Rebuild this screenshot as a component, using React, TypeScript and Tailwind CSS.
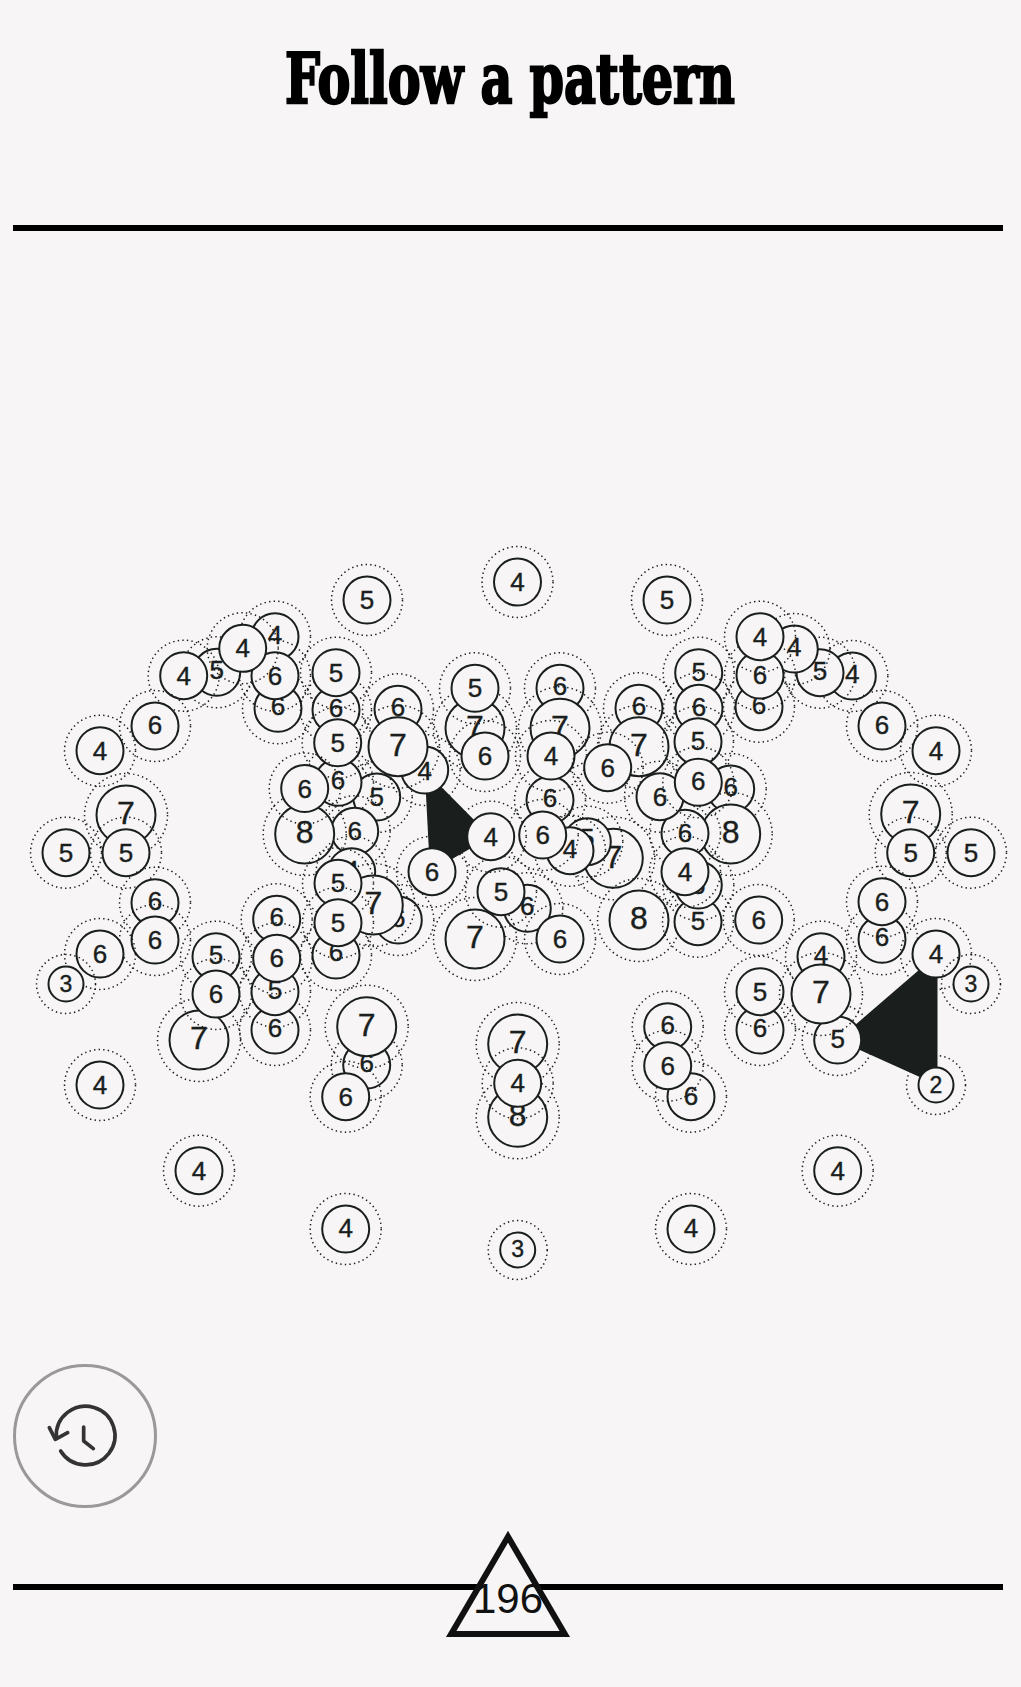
type Node = [number, number, number, number?];

// back to front, later nodes paint over earlier ones (x, y, value, digit nudge)
const NODES: Node[] = [
  [517.5, 582, 4], [367, 600, 5], [667, 600, 5],
  // left arc
  [275, 636.7, 4, -2], [278, 708.3, 6, -2], [216.7, 672.3, 5, -2], [275, 675.7, 6], [242.7, 648.3, 4], [183.7, 675.7, 4],
  [155, 726, 6, -1], [100, 750.7, 4], [126, 815, 7, -2], [126, 852.7, 5], [66, 852.7, 5],
  // left cluster
  [336, 710, 6, -2], [336, 672.7, 5], [376.7, 797, 5], [338, 782.3, 6, -2], [337.7, 742.7, 5], [398, 709.3, 6, -2], [424.7, 770, 4, 1],
  [398, 746.7, 7, -2], [354.7, 831.3, 6], [304.7, 834, 8, -2], [304.7, 788.5, 6], [351.7, 871.7, 4, -2],
  [398.3, 920, 6, -2], [373.3, 905, 7, -2], [338, 883.3, 5], [336, 955, 6, -3], [338, 922.7, 5],
  // lower left
  [155, 902.7, 6, -2], [155, 940, 6], [100, 954, 6], [66, 984, 3], [216, 956.7, 5, -2], [199, 1040, 7, -2], [216, 994, 6],
  [276.7, 919.3, 6, -2], [275, 1030, 6, -2], [275, 991.7, 5, -2], [276.7, 958.3, 6],
  [366.7, 1065, 6, -2], [366.7, 1026.7, 7, -2], [345.7, 1096.7, 6], [100, 1085, 4], [199, 1170.7, 4], [345.7, 1229, 4, -1],
  // centre
  [475, 728.3, 7, -2], [475, 688.3, 5], [485, 756, 6], [560, 688.3, 6, -2], [560, 728.3, 7, -2], [550, 800, 6, -2], [551, 756, 4],
  [613.3, 858.3, 7, -2], [587.3, 841.7, 5, -4], [570, 850.7, 4, -2], [542.7, 835, 6],
  [527.3, 908.3, 6, -2], [475, 939, 7, -2], [501, 891.7, 5], [560, 939, 6], [490.7, 836.7, 4], [432, 871.7, 6], [639, 920, 8, -2],
  // right cluster
  [639, 708.3, 6, -2], [639, 746.7, 7, -2], [607.7, 767.7, 6], [698.7, 672.7, 5, -1], [699, 708.3, 6, -1], [698, 741.7, 5, -1],
  [730.7, 789, 6, -2], [730.7, 834, 8, -2], [685, 833.3, 6], [660, 796.7, 6], [698.3, 782.3, 6, -1],
  [698, 921.7, 5, -1], [698.3, 885, 6], [685, 871.7, 4], [758.7, 920, 6],
  // right arc
  [852.3, 676, 4, -2], [759, 706.7, 6, -2], [820, 672.7, 5, -2], [794.3, 649, 4, -2], [760, 675, 6], [760, 636.7, 4],
  [882, 726, 6, -1], [936, 750.7, 4], [910.7, 814, 7, -2], [910.7, 852.7, 5], [971, 852.7, 5],
  // lower middle and right
  [882, 939.3, 6, -2], [882, 901.7, 6], [821, 956.7, 4, -2], [760, 1030, 6, -2], [760, 991.7, 5], [837.7, 1040, 5, -1], [821, 994, 7, -2],
  [936, 954, 4], [971, 984, 3], [936, 1085, 2], [837.7, 1170.7, 4],
  [517.7, 1044, 7, -2], [517.7, 1117.3, 8, -3], [517.7, 1083.3, 4], [517.7, 1250, 3, -1],
  [667.7, 1026.7, 6, -2], [691, 1096.7, 6, -1], [667.7, 1065.7, 6], [691, 1229, 4, -1],
];

function radius(n: number) {
  if (n <= 3) return 17.5;
  if (n <= 6) return 23.5;
  return 29.5;
}

function fontClass(n: number) {
  if (n <= 3) return "text-[23px]";
  if (n <= 6) return "text-[26px]";
  return "text-[32px]";
}

function fontSize(n: number) {
  if (n <= 3) return 23;
  if (n <= 6) return 26;
  return 32;
}

function PatternNode({ node }: { node: Node }) {
  const [x, y, n, dy = 0] = node;
  const r = radius(n);
  return (
    <g>
      <circle cx={x} cy={y} r={r} className="fill-[#f7f5f6] stroke-[#1a1e1d] stroke-[2]" />
      <text
        x={x}
        y={y + fontSize(n) * 0.35 + dy}
        textAnchor="middle"
        className={`${fontClass(n)} fill-[#1a1e1d] stroke-[#1a1e1d] stroke-[0.4]`}
      >
        {n}
      </text>
      <circle
        cx={x}
        cy={y}
        r={r + 12}
        strokeDasharray="1.4 3.2"
        className="fill-none stroke-[#1a1e1d] stroke-[1.5]"
      />
    </g>
  );
}

function HistoryIcon() {
  return (
    <svg
      viewBox="135 137 240 240"
      fill="none"
      stroke="#333333"
      strokeWidth="11"
      strokeLinecap="round"
      strokeLinejoin="round"
      className="w-20 h-20"
    >
      <path d="M182 302 A88 88 0 1 0 169 262" />
      <path d="M148 232 L166 267 L203 247" />
      <path d="M251 230 V272 L280 295" />
    </svg>
  );
}

export default function App() {
  return (
    <div className="w-[1021px] min-h-screen bg-[#f7f5f6] font-['Liberation_Sans',sans-serif] overflow-hidden">
      <header className="h-[225px] flex justify-center pt-[39px]">
        <h1 className="m-0 h-[80px] whitespace-nowrap scale-x-[0.705] font-['DejaVu_Serif',serif] font-bold text-[70px] leading-[80px] text-black [-webkit-text-stroke:2.5px_#000]">
          Follow a pattern
        </h1>
      </header>
      <div className="h-[6px] mx-[13px] w-[990px] bg-black" />

      <main className="relative h-[1353px]">
        <svg viewBox="0 231 1021 1353" className="block w-[1021px] h-[1353px]">
          <polygon points="424.7,770 490.7,836.7 430,871.7" className="fill-[#1a1e1d]" />
          <polygon points="937.5,954 837.7,1040 937.5,1085" className="fill-[#1a1e1d]" />
          {NODES.map((node, i) => (
            <PatternNode key={i} node={node} />
          ))}
        </svg>
        <button
          type="button"
          className="absolute left-[13px] bottom-[76px] w-[144px] h-[144px] rounded-full border-[3px] border-[#999999] flex items-center justify-center"
        >
          <HistoryIcon />
        </button>
      </main>

      <footer className="relative">
        <div className="h-[6px] mx-[13px] w-[990px] bg-black" />
        <div className="absolute left-[443px] top-[-56px] w-[130px] h-[112px] flex items-start justify-center">
          <svg viewBox="0 0 130 112" className="absolute inset-0 w-[130px] h-[112px]">
            <polygon
              points="65,8.7 8.2,106 121.8,106"
              className="fill-[#f7f5f6] stroke-[#111111] stroke-[6]"
            />
          </svg>
          <span className="relative mt-[49px] text-[42px] leading-[44px] text-[#111111]">196</span>
        </div>
      </footer>
    </div>
  );
}
